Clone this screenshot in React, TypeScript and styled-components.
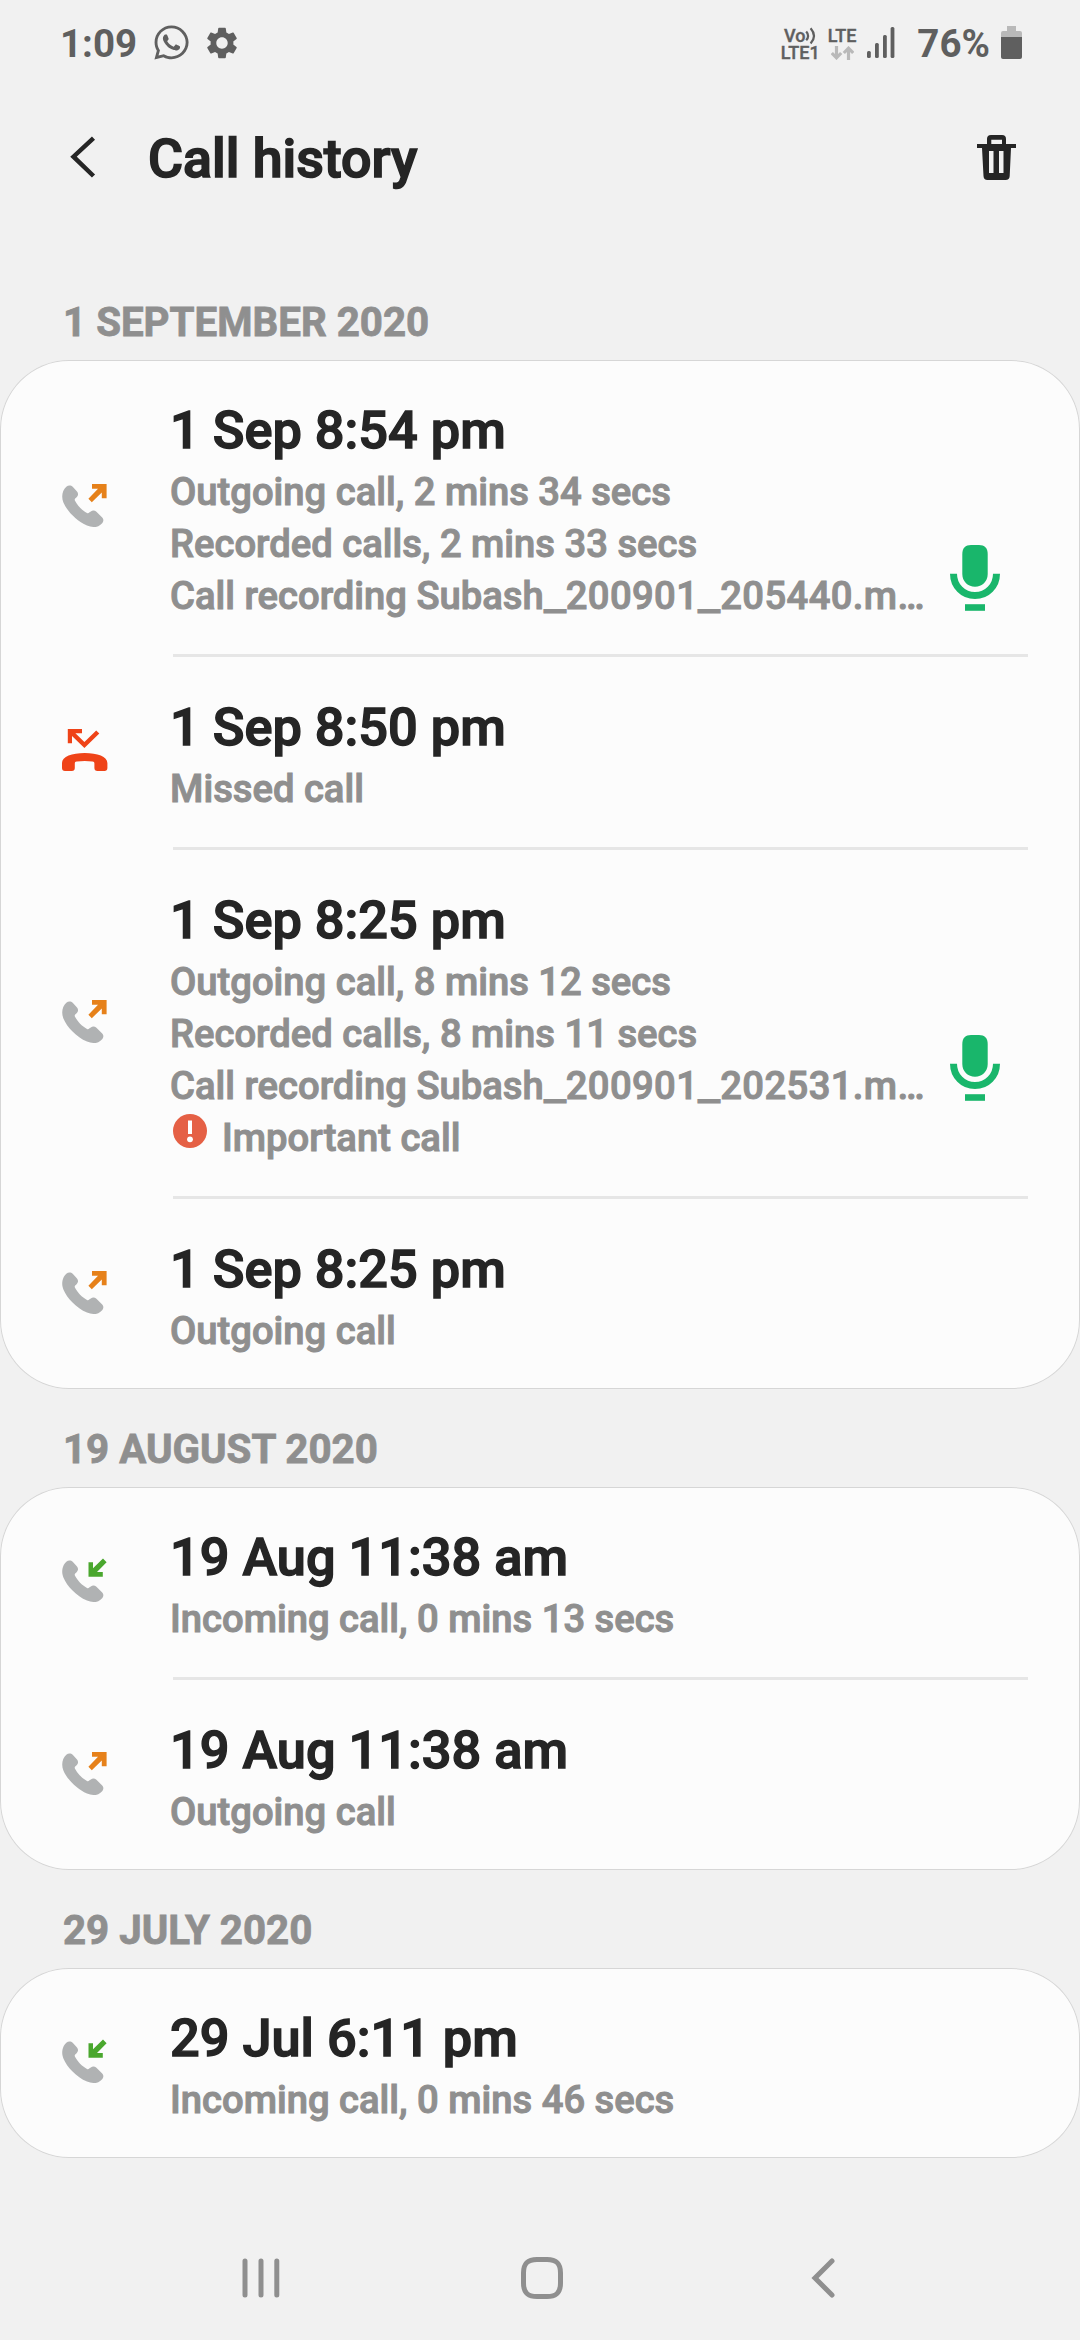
import React from "react";
import styled, { createGlobalStyle } from "styled-components";
import { FaWhatsapp } from "react-icons/fa";
import { MdSettings } from "react-icons/md";

const color = {
  page: "#f1f1f1",
  card: "#fcfcfc",
  edge: "#d6d6d6",
  line: "#e6e6e6",
  ink: "#252525",
  muted: "#8f8f8f",
  status: "#5f5f5f",
  faint: "#b9b9b9",
  handset: "#b0b2b3",
  outgoing: "#e6811a",
  incoming: "#4aa72e",
  missed: "#ef4318",
  alert: "#e56045",
  mic: "#19b66b",
};

const GlobalStyle = createGlobalStyle`
  body {
    margin: 0;
    background: ${color.page};
  }
  * {
    box-sizing: border-box;
  }
  svg {
    display: block;
    flex: none;
  }
`;

const Screen = styled.div`
  width: 1080px;
  height: 2340px;
  display: flex;
  flex-direction: column;
  overflow: hidden;
  background: ${color.page};
  font-family: Roboto, "Noto Sans", sans-serif;
  color: ${color.ink};
`;

const StatusBar = styled.header`
  height: 88px;
  padding: 0 58px 0 60px;
  display: flex;
  align-items: center;
  justify-content: space-between;
  color: ${color.status};
`;

const StatusGroup = styled.div`
  display: flex;
  align-items: center;
`;

const StatusText = styled.span`
  font-size: 38.5px;
  font-weight: 700;
  line-height: 46px;
`;

const BatteryText = styled(StatusText)`
  padding-top: 2px;
`;

const StatusGlyph = styled.span<{ $left: number }>`
  display: flex;
  margin-left: ${(p) => p.$left}px;
  margin-top: -3px;
`;

const Carrier = styled.div<{ $left: number }>`
  margin-left: ${(p) => p.$left}px;
  display: flex;
  flex-direction: column;
  align-items: center;
  font-size: 18px;
  font-weight: 500;
  line-height: 17px;
  -webkit-text-stroke: 0.4px currentColor;
`;

const CarrierLine = styled.span`
  height: 17px;
  display: flex;
  align-items: center;
`;

const AppBar = styled.div`
  height: 174px;
  padding: 33px 64px 0 64px;
  display: flex;
  align-items: flex-start;
`;

const IconButton = styled.button`
  border: 0;
  padding: 0;
  background: none;
  color: ${color.ink};
  display: flex;
  height: 72px;
  align-items: center;
`;

const Title = styled.h1`
  margin: 0 auto 0 48px;
  font-size: 53.7px;
  font-weight: 500;
  line-height: 72px;
  padding-top: 2px;
  -webkit-text-stroke: 1.6px currentColor;
`;

const SectionLabel = styled.h2`
  height: 98px;
  margin: 0;
  padding: 38px 0 0 63px;
  font-size: 40.3px;
  font-weight: 700;
  line-height: 46px;
  text-transform: uppercase;
  color: ${color.muted};
  -webkit-text-stroke: 0.8px currentColor;
`;

const Card = styled.section`
  background: ${color.card};
  border-radius: 69px;
  box-shadow: inset 0 0 0 1px ${color.edge};
`;

const Row = styled.article`
  display: flex;
  padding: 36px 52px 32px 54px;
`;

const Divider = styled.div`
  height: 3px;
  margin: 0 52px 0 173px;
  background: ${color.line};
`;

const CallKind = styled.div`
  width: 116px;
  display: flex;
  align-items: center;
  margin: -36px 0 -32px;
`;

const Details = styled.div`
  width: 755px;
`;

const When = styled.div`
  font-size: 52.3px;
  font-weight: 500;
  line-height: 69px;
  padding-bottom: 1px;
  white-space: nowrap;
  -webkit-text-stroke: 1.4px currentColor;
`;

const Detail = styled.div`
  display: flex;
  font-size: 38.2px;
  font-weight: 500;
  line-height: 52px;
  color: ${color.muted};
  white-space: pre;
  -webkit-text-stroke: 1px currentColor;
`;

const Underscore = styled.span`
  width: 22.3px;
  transform: scaleX(1.29);
  transform-origin: left;
`;

const FileDigits = styled.span`
  letter-spacing: 0.4px;
`;

const AlertBadge = styled.span`
  width: 52px;
  padding: 2px 0 0 3px;
`;

const Recording = styled.div`
  padding: 149px 0 0 25px;
  height: 0;
`;

const NavBar = styled.nav`
  margin-top: auto;
  height: 124px;
  padding: 0 240px;
  display: flex;
  align-items: center;
  justify-content: space-between;
  color: ${color.muted};
`;

const HomeKey = styled.span`
  margin-right: 8px;
`;

type Kind = "outgoing" | "incoming" | "missed";

interface Call {
  kind: Kind;
  when: string;
  details: string[];
  recorded?: boolean;
  important?: string;
}

const sections: { label: string; calls: Call[] }[] = [
  {
    label: "1 September 2020",
    calls: [
      {
        kind: "outgoing",
        when: "1 Sep 8:54 pm",
        details: [
          "Outgoing call, 2 mins 34 secs",
          "Recorded calls, 2 mins 33 secs",
          "Call recording Subash_200901_205440.m…",
        ],
        recorded: true,
      },
      { kind: "missed", when: "1 Sep 8:50 pm", details: ["Missed call"] },
      {
        kind: "outgoing",
        when: "1 Sep 8:25 pm",
        details: [
          "Outgoing call, 8 mins 12 secs",
          "Recorded calls, 8 mins 11 secs",
          "Call recording Subash_200901_202531.m…",
        ],
        recorded: true,
        important: "Important call",
      },
      { kind: "outgoing", when: "1 Sep 8:25 pm", details: ["Outgoing call"] },
    ],
  },
  {
    label: "19 August 2020",
    calls: [
      { kind: "incoming", when: "19 Aug 11:38 am", details: ["Incoming call, 0 mins 13 secs"] },
      { kind: "outgoing", when: "19 Aug 11:38 am", details: ["Outgoing call"] },
    ],
  },
  {
    label: "29 July 2020",
    calls: [{ kind: "incoming", when: "29 Jul 6:11 pm", details: ["Incoming call, 0 mins 46 secs"] }],
  },
];

function CallIcon({ kind }: { kind: Kind }) {
  if (kind === "missed") {
    return (
      <svg width="60" height="60" viewBox="0 0 60 60" fill={color.missed}>
        <path d="M13.8 7H28V11.2H21.4L30.4 20L42.2 8.5L45.3 11.4L30.4 26L18 14V21.2H13.8Z" />
        <path d="M8 46V41C8 34.500 18 31 30.700 31C43.400 31 53.400 34.500 53.400 41V46C53.400 48 52.300 49 50.500 49H43.500C41.400 49 40.400 48 40.400 46V41.600C40.400 40.200 39.800 39.700 38.500 39.500C33.500 38.800 28 38.800 22.700 39.500C21.300 39.700 20.800 40.200 20.800 41.600V46C20.800 48 19.800 49 17.800 49H11C9 49 8 48 8 46Z" />
      </svg>
    );
  }
  return (
    <svg width="60" height="60" viewBox="0 0 60 60">
      <path
        fill={color.handset}
        d="M12.300 9.800C14.300 8 17 8 18.700 9.800L23 14.600C24.600 16.400 24.300 18.600 22.600 20.200L21.200 21.600C20.600 22.200 20.600 23 21 23.800C23.600 28.600 28 33.400 33 35.900C33.800 36.300 34.600 36.200 35.200 35.600L36.800 34.400C38.600 33 40.800 33.200 42.400 34.800L48.200 40.600C49.800 42.200 49.700 44.400 48.400 45.900C44.600 50.400 38.600 51.200 33 48.600C22.400 43.600 13 34.200 9.400 25.400C7 19.400 8.400 13.400 12.300 9.800Z"
      />
      {kind === "outgoing" ? (
        <path fill={color.outgoing} d="M38 7H52.600V21.300H47.800V15.400L37.800 25.200L34.400 21.800L44 11.700H38Z" />
      ) : (
        <path fill={color.incoming} d="M34.500 10.300H39V16.300L49 6.600L52.600 10.200L43 19.900H48.800V24.700H34.500Z" />
      )}
    </svg>
  );
}

function MicIcon() {
  return (
    <svg width="50" height="66" viewBox="0 0 50 66">
      <path
        fill={color.mic}
        d="M12.300 9C12.300 3 15.500 0 21 0H29C34.500 0 37.700 3 37.700 9V29C37.700 36.500 32 41.700 25 41.700C18 41.700 12.300 36.500 12.300 29Z"
      />
      <path fill="none" stroke={color.mic} strokeWidth="7" d="M3.500 28.700C3.500 41 13 50.500 25 50.500C37 50.500 46.500 41 46.500 28.700" />
      <path fill={color.mic} d="M15 59.200H35V65.800H15Z" />
    </svg>
  );
}

function AlertIcon() {
  return (
    <svg width="34" height="34" viewBox="0 0 34 34">
      <circle cx="17" cy="17" r="17" fill={color.alert} />
      <path fill="#fff" d="M15 6.500H19V20H15Z" />
      <circle cx="17" cy="25.300" r="2.900" fill="#fff" />
    </svg>
  );
}

function DetailLine({ text }: { text: string }) {
  const [lead, ...rest] = text.split("_");
  return (
    <Detail>
      <span>{lead}</span>
      {rest.map((part) => (
        <React.Fragment key={part}>
          <Underscore>_</Underscore>
          <FileDigits>{part}</FileDigits>
        </React.Fragment>
      ))}
    </Detail>
  );
}

function CallRow({ call }: { call: Call }) {
  return (
    <Row>
      <CallKind>
        <CallIcon kind={call.kind} />
      </CallKind>
      <Details>
        <When>{call.when}</When>
        {call.details.map((text) => (
          <DetailLine key={text} text={text} />
        ))}
        {call.important && (
          <Detail>
            <AlertBadge>
              <AlertIcon />
            </AlertBadge>
            {call.important}
          </Detail>
        )}
      </Details>
      {call.recorded && (
        <Recording>
          <MicIcon />
        </Recording>
      )}
    </Row>
  );
}

export default function App() {
  return (
    <Screen>
      <GlobalStyle />
      <StatusBar>
        <StatusGroup>
          <StatusText>1:09</StatusText>
          <StatusGlyph $left={15}>
            <FaWhatsapp size={39} />
          </StatusGlyph>
          <StatusGlyph $left={12}>
            <MdSettings size={38} />
          </StatusGlyph>
        </StatusGroup>
        <StatusGroup>
          <Carrier $left={0}>
            <CarrierLine>
              Vo
              <svg width="11" height="18" viewBox="0 0 11 18" fill="none" stroke="currentColor" strokeWidth="2.200">
                <path d="M1.200 4.600Q5 8.900 1.200 13.200M5.600 1.200Q12.400 8.900 5.600 16.600" />
              </svg>
            </CarrierLine>
            <CarrierLine>LTE1</CarrierLine>
          </Carrier>
          <Carrier $left={8}>
            <CarrierLine>LTE</CarrierLine>
            <CarrierLine>
              <svg width="23" height="14" viewBox="0 0 23 14" fill="none" stroke={color.faint} strokeWidth="3.200">
                <path d="M5.500 0V12M0.800 7L5.500 11.800L10.200 7M17.500 14V2M12.800 7L17.500 2.200L22.200 7" />
              </svg>
            </CarrierLine>
          </Carrier>
          <StatusGlyph $left={11}>
            <svg width="28" height="31" viewBox="0 0 28 31" fill="currentColor">
              <rect x="0" y="24" width="3.800" height="7" rx="1.500" />
              <rect x="8" y="16" width="3.800" height="15" rx="1.500" />
              <rect x="16" y="8" width="3.800" height="23" rx="1.500" />
              <rect x="23.600" y="0" width="3.800" height="31" rx="1.500" />
            </svg>
          </StatusGlyph>
          <StatusGlyph $left={22}>
            <BatteryText>76%</BatteryText>
          </StatusGlyph>
          <StatusGlyph $left={11}>
            <svg width="21" height="33" viewBox="0 0 21 33">
              <path fill={color.faint} d="M6 0H15V5H19Q21 5 21 7V12H0V7Q0 5 2 5H6Z" />
              <path fill="currentColor" d="M0 11H21V31Q21 33 19 33H2Q0 33 0 31Z" />
            </svg>
          </StatusGlyph>
        </StatusGroup>
      </StatusBar>

      <AppBar>
        <IconButton aria-label="Back">
          <svg width="36" height="46" viewBox="0 0 36 46" fill="none" stroke="currentColor" strokeWidth="4.500">
            <path d="M29.500 4.200L9.500 22.700L29.500 42" />
          </svg>
        </IconButton>
        <Title>Call history</Title>
        <IconButton aria-label="Delete">
          <svg width="39" height="45" viewBox="0 0 39 45" fill="currentColor" fillRule="evenodd">
            <path d="M10 9V4Q10 0 14 0H25Q29 0 29 4V9H39V13H34L32.700 41Q32.500 45 28.500 45H10.500Q6.700 45 6.500 41L5 13H0V9ZM14.300 9H25V4.700H14.300ZM12 16V38H16.500V16ZM22 16V38H26.500V16Z" />
          </svg>
        </IconButton>
      </AppBar>

      {sections.map((section) => (
        <React.Fragment key={section.label}>
          <SectionLabel>{section.label}</SectionLabel>
          <Card>
            {section.calls.map((call, i) => (
              <React.Fragment key={i}>
                {i > 0 && <Divider />}
                <CallRow call={call} />
              </React.Fragment>
            ))}
          </Card>
        </React.Fragment>
      ))}

      <NavBar>
        <svg width="42" height="42" viewBox="0 0 42 42" fill="none" stroke="currentColor" strokeWidth="5" strokeLinecap="round">
          <path d="M5 4V38M21 4V38M36.800 4V38" />
        </svg>
        <HomeKey>
          <svg width="42" height="42" viewBox="0 0 42 42" fill="none" stroke="currentColor" strokeWidth="5">
            <path d="M16 2.500H26C36 2.500 39.500 7 39.500 16V26C39.500 35 36 39.500 26 39.500H16C6 39.500 2.500 35 2.500 26V16C2.500 7 6 2.500 16 2.500Z" />
          </svg>
        </HomeKey>
        <svg width="30" height="42" viewBox="0 0 30 42" fill="none" stroke="currentColor" strokeWidth="5" strokeLinecap="round">
          <path d="M22 4L5 21L22 38" />
        </svg>
      </NavBar>
    </Screen>
  );
}
